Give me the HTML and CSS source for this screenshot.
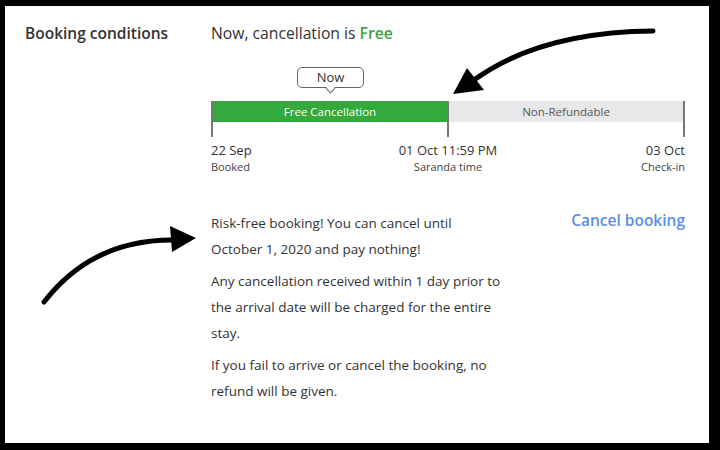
FILE: index.html
```html
<!DOCTYPE html>
<html>
<head>
<meta charset="utf-8">
<link rel="stylesheet" href="styles.css">
</head>
<body>
<div class="frame">
  <div class="label">Booking conditions</div>
  <div class="content">
    <div class="headline">Now, cancellation is <span class="free">Free</span></div>
    <div class="now">Now</div>
    <div class="track">
      <div class="seg seg-free"><div class="fill fill-free">Free Cancellation</div></div>
      <div class="seg seg-non"><div class="fill fill-non">Non-Refundable</div></div>
    </div>
    <div class="dates">
      <div class="date date-left"><div class="d">22 Sep</div><div class="s">Booked</div></div>
      <div class="date date-mid"><div class="d">01 Oct 11:59 PM</div><div class="s">Saranda time</div></div>
      <div class="date date-right"><div class="d">03 Oct</div><div class="s">Check-in</div></div>
    </div>
    <div class="policy">
      <div class="texts">
        <p>Risk-free booking! You can cancel until<br>October 1, 2020 and pay nothing!</p>
        <p>Any cancellation received within 1 day prior to<br>the arrival date will be charged for the entire<br>stay.</p>
        <p>If you fail to arrive or cancel the booking, no<br>refund will be given.</p>
      </div>
      <a class="cancel">Cancel booking</a>
    </div>
  </div>
</div>
<svg class="arrows" width="720" height="450" viewBox="0 0 720 450">
  <path d="M653,31 Q540,32 474,80" fill="none" stroke="#000" stroke-width="5" stroke-linecap="round"/>
  <polygon points="453,94 467,68 484,90" fill="#000"/>
  <path d="M44,302 Q92,240 172,240" fill="none" stroke="#000" stroke-width="5" stroke-linecap="round"/>
  <polygon points="196,238 170,226 172,252" fill="#000"/>
</svg>
</body>
</html>
```
FILE: styles.css
```css
html, body {
  margin: 0;
  padding: 0;
  background: #000;
}
body {
  width: 720px;
  height: 450px;
  padding: 6px 11px 7px 5px;
  box-sizing: border-box;
  font-family: "Open Sans", "Noto Sans", sans-serif;
  color: #333;
}
.frame {
  background: #fff;
  height: 437px;
  box-sizing: border-box;
  padding: 17px 0 0 20px;
  display: flex;
}
.label {
  width: 186px;
  font-size: 15.5px;
  line-height: 20px;
  font-weight: 600;
  color: #333;
}
.content {
  width: 474px;
  display: flex;
  flex-direction: column;
}
.headline {
  font-size: 15.7px;
  line-height: 20px;
  color: #333;
}
.free {
  color: #3aa542;
  font-weight: 600;
}
.now {
  position: relative;
  margin: 24px 0 0 86px;
  width: 67px;
  height: 21px;
  box-sizing: border-box;
  border: 1.5px solid #666;
  border-radius: 5px;
  font-size: 13px;
  line-height: 18px;
  text-align: center;
  color: #333;
}
.now::after {
  content: "";
  position: absolute;
  left: 29px;
  bottom: -5px;
  width: 6px;
  height: 6px;
  background: #fff;
  border-right: 1.5px solid #666;
  border-bottom: 1.5px solid #666;
  transform: rotate(45deg);
}
.track {
  margin-top: 13px;
  display: flex;
  height: 36px;
}
.seg {
  flex: 1;
  box-sizing: border-box;
}
.seg-free {
  border-left: 2px solid #777;
}
.seg-non {
  border-left: 2px solid #777;
  border-right: 2px solid #777;
}
.fill {
  height: 21px;
  font-size: 11.5px;
  line-height: 21px;
  text-align: center;
}
.fill-free {
  background: #34a93c;
  color: #fff;
}
.fill-non {
  background: #e8e8ea;
  color: #555;
}
.dates {
  margin-top: 4px;
  display: grid;
  grid-template-columns: 1fr auto 1fr;
}
.date .d {
  font-size: 13px;
  line-height: 18px;
  color: #333;
}
.date .s {
  font-size: 11px;
  line-height: 16px;
  color: #444;
}
.date-left { text-align: left; }
.date-mid { text-align: center; }
.date-right { text-align: right; }
.policy {
  margin-top: 35px;
  display: flex;
  justify-content: space-between;
  align-items: flex-start;
}
.texts p {
  margin: 0 0 6px 0;
  font-size: 13.5px;
  line-height: 26px;
  color: #333;
}
.cancel {
  font-size: 15.5px;
  line-height: 20px;
  font-weight: 600;
  color: #5b8fe3;
  margin-top: 0;
}
.arrows {
  position: absolute;
  left: 0;
  top: 0;
}
```
